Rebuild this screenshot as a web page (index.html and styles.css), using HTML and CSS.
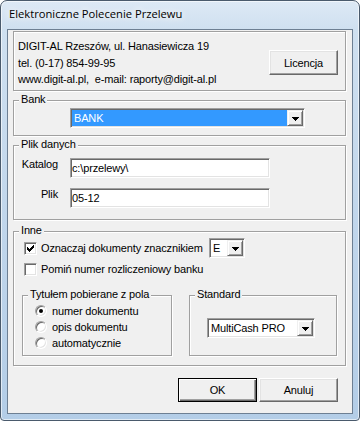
FILE: index.html
```html
<!DOCTYPE html>
<html lang="pl">
<head>
<meta charset="utf-8">
<title>Elektroniczne Polecenie Przelewu</title>
<link rel="stylesheet" href="styles.css">
</head>
<body>
<div class="window">
  <div class="titlebar"><span class="title">Elektroniczne Polecenie Przelewu</span></div>
  <div class="client">
    <div class="group info">
      <div class="info-text">
        <div>DIGIT-AL Rzeszów, ul. Hanasiewicza 19</div>
        <div>tel. (0-17) 854-99-95</div>
        <div>www.digit-al.pl,&nbsp; e-mail: raporty@digit-al.pl</div>
      </div>
      <button class="btn btn-licencja">Licencja</button>
    </div>

    <div class="group bank">
      <div class="legend">Bank</div>
      <div class="combo combo-bank">
        <span class="combo-text selected">BANK</span>
        <span class="drop"><svg width="7" height="4" viewBox="0 0 7 4" shape-rendering="crispEdges"><rect x="0" y="0" width="7" height="1"/><rect x="1" y="1" width="5" height="1"/><rect x="2" y="2" width="3" height="1"/><rect x="3" y="3" width="1" height="1"/></svg></span>
      </div>
    </div>

    <div class="group plik">
      <div class="legend">Plik danych</div>
      <div class="field-row first">
        <span class="field-label">Katalog</span>
        <div class="field">c:\przelewy\</div>
      </div>
      <div class="field-row">
        <span class="field-label">Plik</span>
        <div class="field">05-12</div>
      </div>
    </div>

    <div class="group inne">
      <div class="legend">Inne</div>
      <div class="check-row first">
        <span class="checkbox"><svg width="7" height="7" viewBox="0 0 7 7" shape-rendering="crispEdges"><rect x="6" y="0" width="1" height="1"/><rect x="5" y="1" width="2" height="1"/><rect x="0" y="2" width="1" height="1"/><rect x="4" y="2" width="3" height="1"/><rect x="0" y="3" width="2" height="1"/><rect x="3" y="3" width="3" height="1"/><rect x="0" y="4" width="5" height="1"/><rect x="1" y="5" width="3" height="1"/><rect x="2" y="6" width="1" height="1"/></svg></span>
        <span class="check-label wide">Oznaczaj dokumenty znacznikiem</span>
        <div class="combo combo-e">
          <span class="combo-text">E</span>
          <span class="drop"><svg width="7" height="4" viewBox="0 0 7 4" shape-rendering="crispEdges"><rect x="0" y="0" width="7" height="1"/><rect x="1" y="1" width="5" height="1"/><rect x="2" y="2" width="3" height="1"/><rect x="3" y="3" width="1" height="1"/></svg></span>
        </div>
      </div>
      <div class="check-row second">
        <span class="checkbox"></span>
        <span class="check-label">Pomiń numer rozliczeniowy banku</span>
      </div>

      <div class="sub-groups">
        <div class="group inner tytul">
          <div class="legend">Tytułem pobierane z pola</div>
          <div class="radios">
            <div class="radio-row"><span class="radio on"></span><span>numer dokumentu</span></div>
            <div class="radio-row"><span class="radio"></span><span>opis dokumentu</span></div>
            <div class="radio-row"><span class="radio"></span><span>automatycznie</span></div>
          </div>
        </div>
        <div class="group inner standard">
          <div class="legend">Standard</div>
          <div class="combo combo-std">
            <span class="combo-text">MultiCash PRO</span>
            <span class="drop"><svg width="7" height="4" viewBox="0 0 7 4" shape-rendering="crispEdges"><rect x="0" y="0" width="7" height="1"/><rect x="1" y="1" width="5" height="1"/><rect x="2" y="2" width="3" height="1"/><rect x="3" y="3" width="1" height="1"/></svg></span>
          </div>
        </div>
      </div>
    </div>

    <div class="actions">
      <button class="btn btn-default">OK</button>
      <button class="btn">Anuluj</button>
    </div>
  </div>
</div>
</body>
</html>
```
FILE: styles.css
```css
* { box-sizing: border-box; }

html, body {
  margin: 0;
  padding: 0;
}

body {
  width: 360px;
  height: 421px;
  overflow: hidden;
  background: #ffffff;
  font-family: "Liberation Sans", Arial, sans-serif;
  font-size: 11px;
  letter-spacing: -0.15px;
  color: #000;
}

.window {
  width: 360px;
  height: 421px;
  border: 1px solid #4a5a6c;
  border-radius: 7px 7px 4px 4px;
  background: linear-gradient(180deg, #dde9f5 0px, #cfe0f0 28px, #c2d7ec 200px, #b3cde7 421px);
  box-shadow: inset 0 0 0 1px rgba(255, 255, 255, 0.6);
  padding: 0 6px 6px 6px;
  display: flex;
  flex-direction: column;
}

.titlebar {
  height: 28px;
  padding: 5px 0 0 2px;
  font-family: "Open Sans", "Noto Sans", sans-serif;
  font-size: 11.2px;
  line-height: 16px;
  letter-spacing: 0;
  color: #000;
}

.title {
  text-shadow: 0 0 6px #ffffff, 0 0 10px #ffffff;
}

.client {
  width: 346px;
  height: 385px;
  border: 1px solid #6d7f93;
  background: #f0f0f0;
  padding: 0 0 0 5px;
}

/* etched group box */
.group {
  width: 333px;
  border: 1px solid #a0a0a0;
  box-shadow: inset 1px 1px 0 #ffffff, 1px 1px 0 #ffffff;
}

.legend {
  width: fit-content;
  height: 13px;
  margin-top: -8px;
  margin-left: 5px;
  padding: 0 2px;
  background: #f0f0f0;
  line-height: 13px;
  white-space: nowrap;
}

.info {
  margin-top: 1px;
  height: 60px;
  display: flex;
  justify-content: space-between;
  align-items: flex-start;
  padding: 6px 7px 0 4px;
}

.info-text {
  line-height: 16.5px;
  white-space: nowrap;
}

/* buttons */
.btn {
  font: inherit;
  letter-spacing: inherit;
  color: #000;
  background: #f0f0f0;
  border: 1px solid;
  border-color: #ffffff #696969 #696969 #ffffff;
  box-shadow: inset -1px -1px 0 #a0a0a0, inset 1px 1px 0 #e3e3e3;
  padding: 0;
  margin: 0;
  width: 79px;
  height: 24px;
}

.btn-default {
  border-color: #000;
  box-shadow: inset 1px 1px 0 #ffffff, inset -1px -1px 0 #696969, inset -2px -2px 0 #a0a0a0;
}

.btn-licencja {
  margin-top: 12px;
  width: 69px;
  height: 25px;
}

/* combo boxes */
.combo {
  height: 20px;
  display: flex;
  background: #ffffff;
  border: 1px solid;
  border-color: #a0a0a0 #ffffff #ffffff #a0a0a0;
  box-shadow: inset 1px 1px 0 #696969, inset -1px -1px 0 #e3e3e3;
  padding: 1px;
}

.combo-text {
  flex: 1;
  padding: 1px 0 0 2px;
  line-height: 15px;
  white-space: nowrap;
}

.combo-text.selected {
  background: #3399ff;
  color: #ffffff;
}

.drop {
  width: 16px;
  height: 16px;
  background: #f0f0f0;
  border: 1px solid;
  border-color: #f0f0f0 #696969 #696969 #f0f0f0;
  box-shadow: inset 1px 1px 0 #ffffff, inset -1px -1px 0 #a0a0a0;
  display: flex;
  align-items: center;
  justify-content: center;
  padding: 1px 0 0 1px;
}

.drop svg { fill: #000; display: block; }

.bank {
  margin-top: 9px;
  height: 36px;
}

.combo-bank {
  margin: 2px 0 0 56px;
  width: 235px;
}

/* data file */
.plik {
  margin-top: 9px;
  height: 75px;
}

.field-row {
  display: flex;
  align-items: flex-start;
  margin-top: 10px;
}

.field-row.first { margin-top: 7px; }

.field-label {
  width: 44px;
  text-align: right;
  line-height: 13px;
}

.field {
  margin-left: 12px;
  width: 200px;
  height: 20px;
  background: #ffffff;
  border: 1px solid;
  border-color: #a0a0a0 #ffffff #ffffff #a0a0a0;
  box-shadow: inset 1px 1px 0 #696969, inset -1px -1px 0 #e3e3e3;
  padding: 1px 1px 1px 1px;
  line-height: 16px;
  white-space: nowrap;
}

/* other */
.inne {
  margin-top: 11px;
  height: 135px;
}

.check-row {
  display: flex;
  align-items: center;
  margin-left: 10px;
  line-height: 13px;
}

.check-row.first {
  margin-top: 1px;
  height: 20px;
}

.check-row.second {
  margin-top: 5px;
  height: 13px;
}

.checkbox {
  width: 13px;
  height: 13px;
  flex: none;
  background: #ffffff;
  border: 1px solid;
  border-color: #a0a0a0 #ffffff #ffffff #a0a0a0;
  box-shadow: inset 1px 1px 0 #696969, inset -1px -1px 0 #e3e3e3;
  margin-right: 4px;
  display: flex;
  align-items: center;
  justify-content: center;
}

.checkbox svg { fill: #000; display: block; }

.check-label { white-space: nowrap; }
.check-label.wide { width: 168px; }

.combo-e { width: 36px; }

.sub-groups {
  display: flex;
  gap: 17px;
  margin: 19px 0 0 8px;
}

.group.inner { height: 61px; }
.tytul { width: 150px; }
.standard { width: 148px; }

.radios { margin-top: 2px; }

.radio-row {
  display: flex;
  align-items: center;
  height: 16px;
  line-height: 13px;
  white-space: nowrap;
}

.radio {
  width: 12px;
  height: 12px;
  flex: none;
  border-radius: 50%;
  background: #ffffff;
  border: 1px solid;
  border-color: #a0a0a0 #ffffff #ffffff #a0a0a0;
  box-shadow: inset 1px 1px 0 #696969, inset -1px -1px 0 #e3e3e3;
  margin: 0 5px 0 12px;
  display: flex;
  align-items: center;
  justify-content: center;
}

.radio.on::after {
  content: "";
  width: 4px;
  height: 4px;
  border-radius: 50%;
  background: #000;
}

.combo-std {
  margin: 17px 0 0 17px;
  width: 108px;
}

.actions {
  width: 333px;
  margin-top: 12px;
  padding-right: 8px;
  display: flex;
  justify-content: flex-end;
  gap: 2px;
}
```
